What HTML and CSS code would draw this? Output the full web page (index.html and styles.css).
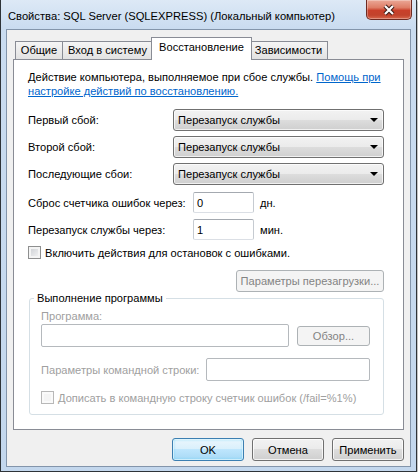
FILE: index.html
```html
<!DOCTYPE html>
<html lang="ru">
<head>
    <meta charset="UTF-8">
    <meta name="viewport" content="width=device-width, initial-scale=1.0">
    <title>Свойства: SQL Server (SQLEXPRESS)</title>
    <link rel="stylesheet" href="styles.css">
</head>
<body>
    <div class="window">
        <div class="titlebar">
            <span class="title">Свойства: SQL Server (SQLEXPRESS) (Локальный компьютер)</span>
            <button class="close-btn" aria-label="Закрыть">
                <svg width="16" height="12" viewBox="0 0 16 12">
                    <path d="M4 2 L12 10 M12 2 L4 10" stroke="#3b1a14" stroke-width="4.2"/>
                    <path d="M4 2 L12 10 M12 2 L4 10" stroke="#fff" stroke-width="2.2"/>
                </svg>
            </button>
        </div>

        <div class="client">
            <div class="tabs">
                <div class="tab tab-general">Общие</div>
                <div class="tab tab-logon">Вход в систему</div>
                <div class="tab tab-recovery active">Восстановление</div>
                <div class="tab tab-deps">Зависимости</div>
            </div>

            <div class="panel">
                <p class="desc">Действие компьютера, выполняемое при сбое службы. <a href="#">Помощь при<br>настройке действий по восстановлению.</a></p>

                <div class="field first">
                    <span class="field-label">Первый сбой:</span>
                    <div class="combo"><span>Перезапуск службы</span><span class="combo-arrow"></span></div>
                </div>
                <div class="field">
                    <span class="field-label">Второй сбой:</span>
                    <div class="combo"><span>Перезапуск службы</span><span class="combo-arrow"></span></div>
                </div>
                <div class="field">
                    <span class="field-label">Последующие сбои:</span>
                    <div class="combo"><span>Перезапуск службы</span><span class="combo-arrow"></span></div>
                </div>

                <div class="field spin first-spin">
                    <span class="spin-label">Сброс счетчика ошибок через:</span>
                    <input class="textbox short" type="text" value="0">
                    <span class="unit">дн.</span>
                </div>
                <div class="field spin">
                    <span class="spin-label">Перезапуск службы через:</span>
                    <input class="textbox short" type="text" value="1">
                    <span class="unit">мин.</span>
                </div>

                <label class="checkrow stop-actions">
                    <input class="check" type="checkbox">
                    <span>Включить действия для остановок с ошибками.</span>
                </label>

                <div class="reboot-row">
                    <button class="btn reboot" disabled>Параметры перезагрузки...</button>
                </div>

                <div class="group">
                    <span class="group-title">Выполнение программы</span>
                    <div class="muted program-label">Программа:</div>
                    <div class="program-row">
                        <input class="textbox program" type="text" disabled>
                        <button class="btn browse" disabled>Обзор...</button>
                    </div>
                    <div class="args-row">
                        <span class="muted args-label">Параметры командной строки:</span>
                        <input class="textbox args" type="text" disabled>
                    </div>
                    <label class="checkrow fail-count">
                        <input class="check" type="checkbox" disabled>
                        <span class="muted">Дописать в командную строку счетчик ошибок (/fail=%1%)</span>
                    </label>
                </div>
            </div>

            <div class="dialog-buttons">
                <button class="btn default">OK</button>
                <button class="btn">Отмена</button>
                <button class="btn">Применить</button>
            </div>
        </div>
    </div>
</body>
</html>
```

FILE: styles.css
```css
* {
    box-sizing: border-box;
}

body {
    margin: 0;
    background: #fff;
    font-family: "Liberation Sans", Arial, sans-serif;
    font-size: 11.1px;
    color: #000;
    white-space: nowrap;
}

/* window frame */
.window {
    width: 417px;
    height: 472px;
    display: flex;
    flex-direction: column;
    padding: 0 5px 4px;
    border: 1px solid #2e3338;
    border-top: none;
    background: linear-gradient(180deg, #dde9f6 0, #cadcf0 28px, #c3d7ed 100%);
    box-shadow: 1px 1px 2px rgba(0, 0, 0, 0.35);
}

.titlebar {
    height: 29px;
    display: flex;
    align-items: flex-start;
}

.title {
    padding: 9px 0 0 2px;
    font-size: 11.2px;
    line-height: 14px;
}

.close-btn {
    margin-left: auto;
    margin-right: -1px;
    width: 46px;
    height: 20px;
    padding: 0;
    display: flex;
    align-items: center;
    justify-content: center;
    border: 1px solid #6e2b22;
    border-top: none;
    border-radius: 0 0 5px 5px;
    background: linear-gradient(180deg, #eba897 0, #de7d66 40%, #c9402a 55%, #c2432c 80%, #d8674c 100%);
    box-shadow: inset 0 0 0 1px rgba(255, 255, 255, 0.3);
}

.client {
    flex: 1;
    display: flex;
    flex-direction: column;
    border: 1px solid #8395ab;
    background: #f0f0f0;
}

/* tabs */
.tabs {
    display: flex;
    align-items: flex-end;
    height: 22px;
    margin: 7px 0 0 8px;
    position: relative;
    z-index: 1;
}

.tab {
    height: 18px;
    line-height: 17px;
    text-align: center;
    border: 1px solid #898c95;
    border-bottom: none;
    background: linear-gradient(180deg, #f5f5f5, #e2e2e2);
}

.tab + .tab {
    margin-left: -1px;
}

.tab-general {
    width: 48px;
}

.tab-logon {
    width: 91px;
}

.tab-deps {
    width: 79px;
}

.tab.active {
    width: 101px;
    height: 23px;
    margin: 0 -2px -1px -2px;
    line-height: 19px;
    background: #fff;
    position: relative;
    z-index: 2;
}

.panel {
    height: 371px;
    margin: 0 6px;
    padding: 10px 19px 0 14px;
    border: 1px solid #898c95;
    background: #fff;
}

.desc {
    margin: 0;
    line-height: 14px;
}

.desc a {
    color: #0066cc;
}

/* failure rows */
.field {
    display: flex;
    align-items: center;
    margin-top: 5px;
}

.field.first {
    margin-top: 11px;
}

.field-label {
    width: 145px;
    flex: none;
}

.combo {
    width: 211px;
    height: 22px;
    display: flex;
    align-items: center;
    justify-content: space-between;
    padding: 0 4px;
    border: 1px solid #707070;
    border-radius: 3px;
    background: linear-gradient(180deg, #f2f2f2 0, #ebebeb 50%, #dddddd 50%, #cfcfcf 100%);
    box-shadow: inset 0 0 0 1px rgba(255, 255, 255, 0.7);
}

.combo-arrow {
    width: 0;
    height: 0;
    margin-right: 1px;
    border-left: 4px solid transparent;
    border-right: 4px solid transparent;
    border-top: 4px solid #000;
}

.field.spin {
    margin-top: 6px;
}

.field.first-spin {
    margin-top: 7px;
}

.spin-label {
    width: 165px;
    flex: none;
}

.textbox {
    height: 21px;
    padding: 0 3px;
    font: inherit;
    color: #000;
    border: 1px solid #abadb3;
    border-color: #a4a9b0 #c6cbd1 #dbdfe5 #c6cbd1;
    border-radius: 2px;
    background: #fff;
    outline: none;
}

.textbox.short {
    width: 61px;
}

.unit {
    margin-left: 6px;
}

/* checkboxes */
.checkrow {
    display: flex;
    align-items: center;
    height: 15px;
}

.check {
    appearance: none;
    width: 13px;
    height: 13px;
    margin: 0 4px 0 0;
    flex: none;
    border: 1px solid #8e8f8f;
    background: linear-gradient(135deg, #c9ccd1, #f7f7f7);
    box-shadow: inset 0 0 0 2px #f4f4f4;
}

.check:disabled {
    border-color: #b8b8b8;
    background: #f4f4f4;
    box-shadow: inset 0 0 0 2px #fafafa;
}

.stop-actions {
    margin-top: 5px;
}

/* buttons */
.btn {
    height: 23px;
    padding: 0;
    font: inherit;
    color: #000;
    border: 1px solid #707070;
    border-radius: 3px;
    background: linear-gradient(180deg, #f2f2f2 0, #ebebeb 50%, #dddddd 50%, #cfcfcf 100%);
    box-shadow: inset 0 0 0 1px rgba(255, 255, 255, 0.75);
}

.btn:disabled {
    color: #838383;
    border-color: #adb2b5;
    background: #f4f4f4;
    box-shadow: none;
}

.btn.default {
    border-color: #3c7fb1;
    background: linear-gradient(180deg, #eaf6fd 0, #d9f0fc 50%, #bee6fd 50%, #a7d9f5 100%);
    box-shadow: inset 0 0 0 1px rgba(255, 255, 255, 0.6), inset 0 0 3px #48c9f5;
}

.reboot-row {
    display: flex;
    justify-content: flex-end;
    margin-top: 10px;
}

.btn.reboot {
    width: 148px;
    height: 22px;
}

/* program group */
.group {
    margin: 6px 0 0 1px;
    height: 117px;
    padding: 0 13px 0 11px;
    border: 1px solid #d5dfe5;
    border-radius: 3px;
}

.group-title {
    display: block;
    width: fit-content;
    margin: -8px 0 0 -7px;
    padding: 0 3px;
    line-height: 14px;
    background: #fff;
}

.muted {
    color: #a0a0a0;
}

.program-label {
    margin-top: 4px;
    line-height: 14px;
}

.program-row {
    display: flex;
    align-items: center;
    justify-content: space-between;
    height: 23px;
    margin-top: 1px;
}

.textbox:disabled {
    border-color: #b5b9bd;
    background: #fff;
}

.textbox.program {
    width: 248px;
    height: 23px;
}

.btn.browse {
    width: 73px;
    height: 20px;
}

.args-row {
    display: flex;
    align-items: center;
    margin-top: 11px;
}

.args-label {
    width: 165px;
    flex: none;
}

.textbox.args {
    width: 165px;
    height: 23px;
}

.fail-count {
    margin-top: 9px;
}

.dialog-buttons {
    display: flex;
    justify-content: flex-end;
    gap: 8px;
    margin: 8px 6px 0 0;
}

.dialog-buttons .btn {
    width: 72px;
}
```
